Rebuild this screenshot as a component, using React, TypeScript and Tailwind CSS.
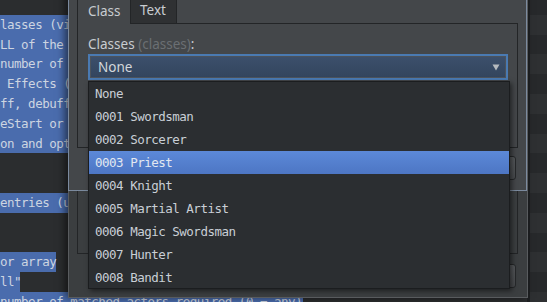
const editorRows: { text: string; sel: 'full' | 'none' | number }[] = [
  { text: '', sel: 'none' },
  { text: 'lasses (via notetags) the actor must belong to.', sel: 'full' },
  { text: 'LL of the listed classes must be matched.', sel: 'full' },
  { text: 'number of matched classes that is required.', sel: 'full' },
  { text: ' Effects (buff, debuff and state icons).', sel: 'full' },
  { text: 'ff, debuff and state turn counters.', sel: 'full' },
  { text: 'eStart or onTurnEnd hook callbacks.', sel: 'full' },
  { text: 'on and optional parameters.', sel: 'full' },
  { text: '', sel: 'none' },
  { text: '', sel: 'none' },
  { text: 'entries (use commas to separate).', sel: 'full' },
  { text: '', sel: 'none' },
  { text: '', sel: 'none' },
  { text: 'or array', sel: 56 },
  { text: 'll"', sel: 20 },
  { text: 'number of matched actors required (0 = any)', sel: 303 },
]

const classes = [
  'None',
  '0001 Swordsman',
  '0002 Sorcerer',
  '0003 Priest',
  '0004 Knight',
  '0005 Martial Artist',
  '0006 Magic Swordsman',
  '0007 Hunter',
  '0008 Bandit',
]

function EditorRow({ text, sel }: { text: string; sel: 'full' | 'none' | number }) {
  return (
    <div className="relative h-[19.8px] leading-[19.8px] whitespace-pre">
      {sel !== 'none' && (
        <div
          className="absolute left-0 top-0 h-full bg-[#4a6cad]"
          style={{ width: sel === 'full' ? '100%' : `${sel}px` }}
        />
      )}
      <span className="relative">{text}</span>
    </div>
  )
}

export default function App() {
  return (
    <div className="relative w-[547px] h-[302px] overflow-hidden bg-[#2b2d2f] flex">
      {/* Editor behind */}
      <div className="w-[527px] -mt-[5px] font-['DejaVu_Sans_Mono',monospace] text-[12.5px] tracking-[-0.5px] text-[#cdd5e1]">
        {editorRows.map((row, i) => (
          <EditorRow key={i} text={row.text} sel={row.sel} />
        ))}
      </div>

      {/* Right side list */}
      <div className="flex-1 -mt-[5px] border-l-[3px] border-[#1e2022]">
        {Array.from({ length: 17 }).map((_, i) => (
          <div key={i} className={`h-[19.8px] ${i % 2 === 0 ? 'bg-[#27292b]' : 'bg-[#2e3032]'}`} />
        ))}
      </div>

      {/* Back window */}
      <div className="absolute left-[68px] top-[-10px] w-[460px] h-[308px] bg-[#3b3e40] border border-[#595c5f] shadow-[-3px_0_8px_rgba(0,0,0,0.55)] flex flex-col">
        <div className="ml-[8px] mt-[159px] w-[441px] h-[104px] border border-[#232527]" />
        <div className="ml-[19px] mt-[10px] w-[428px] h-[24px] rounded-[3px] border border-[#26282a] bg-linear-to-b from-[#55585b] to-[#47494c]" />
      </div>

      {/* Front window */}
      <div className="absolute left-[68px] top-[-10px] w-[459px] h-[201px] bg-[#44474a] border border-[#7b8a9e] flex flex-col font-['Noto_Sans',sans-serif] text-[13.5px] text-[#c8ccd0]">
        <div className="flex h-[33px] ml-[8px] w-[441px]">
          <div className="w-[53px] border-l border-[#232527] flex items-end pb-[4px] pl-[10px] leading-[18px]">
            Class
          </div>
          <div className="w-[47px] border-l border-r border-b border-[#232527] bg-[#2f3133] flex items-end pb-[4px] pl-[9px] leading-[18px]">
            Text
          </div>
          <div className="flex-1 border-b border-[#232527]" />
        </div>
        <div className="ml-[8px] w-[441px] h-[124px] border-l border-r border-b border-[#232527] pl-[10px] pt-[11px]">
          <div className="leading-[18px]">
            Classes <span className="text-[#6b6f73]">(classes)</span>:
          </div>
          <div className="mt-[1px] w-[420px] h-[26px] border-2 border-[#4a7ab2] shadow-[inset_0_0_0_1px_#4d535b] bg-linear-to-b from-[#3c506c] to-[#33455d] flex items-center justify-between pl-[8px] pr-[6px] text-[#d3d7db]">
            <span className="leading-[18px]">None</span>
            <svg width="8" height="7" viewBox="0 0 8 7">
              <path d="M0.5 0.5 L7.5 0.5 L4 6.5 Z" fill="#b6babe" />
            </svg>
          </div>
        </div>
        <div className="ml-[19px] mt-[8px] w-[428px] h-[24px] rounded-[3px] border border-[#26282a] bg-linear-to-b from-[#56595c] to-[#484b4e]" />
      </div>

      {/* Dropdown popup */}
      <div className="absolute left-[88px] top-[81px] w-[422px] h-[208px] bg-[#2b2e31] border border-[#1b1d1f] shadow-[2px_2px_5px_rgba(0,0,0,0.5)] font-['DejaVu_Sans_Mono',monospace] text-[12.5px] tracking-[-0.5px]">
        {classes.map((name, i) => (
          <div
            key={name}
            className={`h-[23px] leading-[23px] pl-[6px] whitespace-pre ${
              i === 3
                ? 'bg-linear-to-b from-[#5c89d8] to-[#4d76c4] text-[#e2e8f0]'
                : 'text-[#c9cfd6]'
            }`}
          >
            {name}
          </div>
        ))}
      </div>
    </div>
  )
}
